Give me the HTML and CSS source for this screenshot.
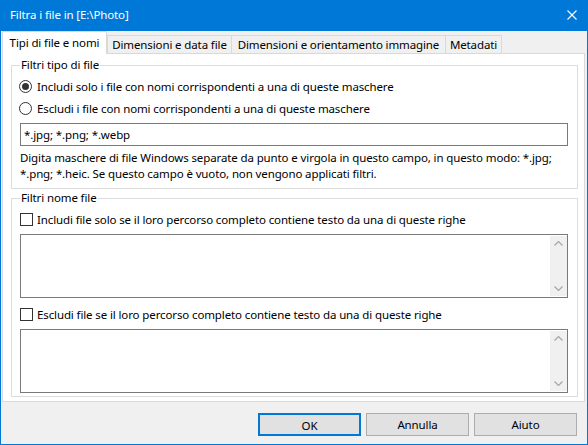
FILE: index.html
```html
<!DOCTYPE html>
<html>
<head>
<meta charset="utf-8">
<title>Filtra i file</title>
<link rel="stylesheet" href="styles.css">
</head>
<body>
<div class="window">
  <div class="titlebar">
    <span class="title">Filtra i file in [E:\Photo]</span>
    <svg class="close" width="10" height="10" viewBox="0 0 10 10"><path d="M0.5 0.5L9.5 9.5M9.5 0.5L0.5 9.5" stroke="#fff" stroke-width="1.1" fill="none"/></svg>
  </div>
  <div class="tabs">
    <div class="tab active t1">Tipi di file e nomi</div>
    <div class="tab t2">Dimensioni e data file</div>
    <div class="tab t3">Dimensioni e orientamento immagine</div>
    <div class="tab t4">Metadati</div>
  </div>
  <div class="panel">
    <fieldset class="group g1">
      <legend>Filtri tipo di file</legend>
      <div class="opt"><span class="radio checked"></span><span>Includi solo i file con nomi corrispondenti a una di queste maschere</span></div>
      <div class="opt"><span class="radio"></span><span>Escludi i file con nomi corrispondenti a una di queste maschere</span></div>
      <div class="input">*.jpg; *.png; *.webp</div>
      <p class="hint">Digita maschere di file Windows separate da punto e virgola in questo campo, in questo modo: *.jpg;<br>*.png; *.heic. Se questo campo è vuoto, non vengono applicati filtri.</p>
    </fieldset>
    <fieldset class="group g2">
      <legend>Filtri nome file</legend>
      <div class="opt"><span class="check"></span><span>Includi file solo se il loro percorso completo contiene testo da una di queste righe</span></div>
      <div class="memo">
        <div class="vscroll">
          <svg width="9" height="5" viewBox="0 0 9 5"><polyline points="0.5,4.5 4.5,0.5 8.5,4.5" fill="none" stroke="#a6a6a6" stroke-width="1.2"/></svg>
          <svg width="9" height="5" viewBox="0 0 9 5"><polyline points="0.5,0.5 4.5,4.5 8.5,0.5" fill="none" stroke="#a6a6a6" stroke-width="1.2"/></svg>
        </div>
      </div>
      <div class="opt opt2"><span class="check"></span><span>Escludi file se il loro percorso completo contiene testo da una di queste righe</span></div>
      <div class="memo">
        <div class="vscroll">
          <svg width="9" height="5" viewBox="0 0 9 5"><polyline points="0.5,4.5 4.5,0.5 8.5,4.5" fill="none" stroke="#a6a6a6" stroke-width="1.2"/></svg>
          <svg width="9" height="5" viewBox="0 0 9 5"><polyline points="0.5,0.5 4.5,4.5 8.5,0.5" fill="none" stroke="#a6a6a6" stroke-width="1.2"/></svg>
        </div>
      </div>
    </fieldset>
  </div>
  <div class="footer">
    <button class="btn default">OK</button>
    <button class="btn">Annulla</button>
    <button class="btn">Aiuto</button>
  </div>
</div>
</body>
</html>
```
FILE: styles.css
```css
* { box-sizing: border-box; }
html, body { margin: 0; padding: 0; }
body {
  width: 588px;
  height: 445px;
  overflow: hidden;
  font-family: "Noto Sans", "Open Sans", sans-serif;
  font-size: 11.5px;
  letter-spacing: -0.12px;
  color: #000;
  background: #f0f0f0;
}
.window {
  width: 588px;
  height: 445px;
  border: 1px solid #0078d7;
  border-top: 0;
  background: #f0f0f0;
  display: flex;
  flex-direction: column;
}
.titlebar {
  height: 31px;
  flex: none;
  background: #0078d7;
  color: #fff;
  display: flex;
  align-items: center;
  justify-content: space-between;
  padding: 0 10px 1px 9px;
}
.title { line-height: 16px; }
.close { display: block; }

.tabs {
  height: 22px;
  flex: none;
  display: flex;
  align-items: flex-end;
  padding-left: 1px;
}
.tab {
  height: 18px;
  border: 1px solid #d9d9d9;
  border-bottom: 0;
  border-right: 0;
  background: #f0f0f0;
  line-height: 17px;
  text-align: center;
  white-space: nowrap;
}
.tab.active {
  height: 23px;
  margin-bottom: -1px;
  position: relative;
  z-index: 1;
  background: #fff;
  border-right: 1px solid #d9d9d9;
  line-height: 21px;
}
.t1 { width: 105px; }
.t2 { width: 124px; }
.t3 { width: 214px; }
.t4 { width: 57px; border-right: 1px solid #d9d9d9; }

.panel {
  height: 349px;
  flex: none;
  margin: 0 2px 0 1px;
  border: 1px solid #d9d9d9;
  background: #fff;
  padding: 0 6px 0 8px;
}
.group {
  margin: 0;
  border: 1px solid #dcdcdc;
  padding: 2px 9px 6px 8px;
  min-width: 0;
}
.group legend {
  padding: 0 1px;
  line-height: 16px;
}
.g1 { margin-top: 3px; }
.g2 { margin-top: 1px; padding-bottom: 3px; }

.opt {
  height: 22px;
  display: flex;
  align-items: center;
  gap: 4px;
  white-space: nowrap;
}
.opt2 { margin-top: 5px; }
.radio {
  width: 13px;
  height: 13px;
  margin-left: -1px;
  margin-right: 1px;
  border: 1px solid #333;
  border-radius: 50%;
  background: #fff;
  display: flex;
  align-items: center;
  justify-content: center;
  flex: none;
}
.radio.checked::after {
  content: "";
  width: 7px;
  height: 7px;
  border-radius: 50%;
  background: #333;
}
.check {
  width: 13px;
  height: 13px;
  border: 1px solid #333;
  background: #fff;
  flex: none;
}
.input {
  margin-top: 4px;
  height: 23px;
  border: 1px solid #7a7a7a;
  padding-left: 3px;
  line-height: 21px;
}
.hint {
  margin: 4px 0 0;
  line-height: 16px;
  white-space: nowrap;
}
.memo {
  margin-top: 4px;
  height: 64px;
  border: 1px solid #7a7a7a;
  padding: 1px 0;
  display: flex;
  justify-content: flex-end;
}
.vscroll {
  width: 17px;
  background: #f0f0f0;
  display: flex;
  flex-direction: column;
  justify-content: space-between;
  align-items: center;
  padding: 5px 0;
}
.vscroll svg { display: block; }

.footer {
  flex: 1;
  display: flex;
  justify-content: flex-end;
  gap: 5px;
  padding: 11px 10px 0 0;
}
.btn {
  width: 103px;
  height: 23px;
  border: 1px solid #adadad;
  background: #e1e1e1;
  font: inherit;
  letter-spacing: inherit;
  color: #000;
  padding: 0;
  line-height: 21px;
}
.btn.default { border: 2px solid #0078d7; }
```
